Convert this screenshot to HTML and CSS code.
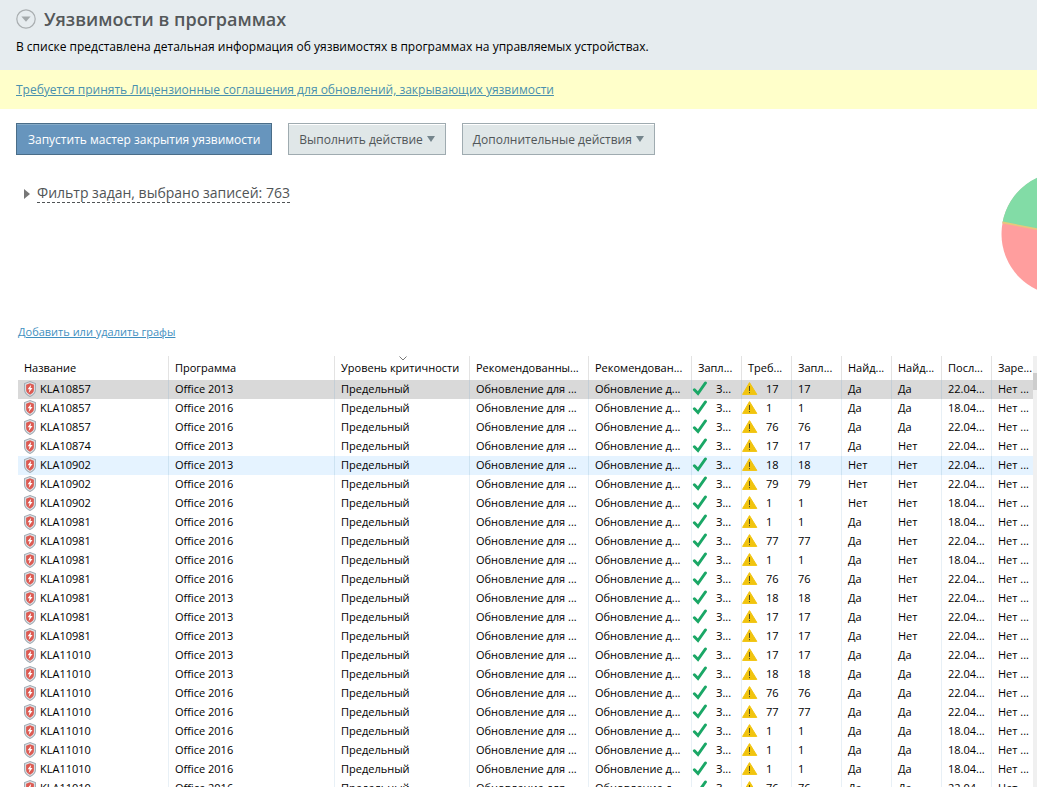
FILE: index.html
```html
<!DOCTYPE html>
<html lang="ru">
<head>
    <meta charset="UTF-8">
    <meta name="viewport" content="width=device-width, initial-scale=1.0">
    <title>Уязвимости в программах</title>
    <link rel="stylesheet" href="styles.css">
</head>
<body>
    <svg class="sprite" aria-hidden="true">
        <symbol id="icon-shield" viewBox="0 0 12 16">
            <path d="M6 .6 11.4 2.6V9C11.4 12 9 14 6 15.4 3 14 .6 12 .6 9V2.6Z" fill="#dfe5e9" stroke="#a0aab3" stroke-width="1.1"/>
            <path d="M6 2.3 9.9 3.7V9C9.9 11 8.2 12.6 6 13.7 3.8 12.6 2.1 11 2.1 9V3.7Z" fill="#dc5a52"/>
            <path d="M7.2 3.8 3.6 8.2H5.6L4.7 12 8.5 7.1H6.5Z" fill="#fff"/>
        </symbol>
        <symbol id="icon-check" viewBox="0 0 16 16">
            <path d="M2.4 8.8 6 12.5 13.4 2" fill="none" stroke="#1aa766" stroke-width="3" stroke-linecap="round"/>
        </symbol>
        <symbol id="icon-warning" viewBox="0 0 16 16">
            <path d="M7.5 1.6 14.8 13.4H.6Z" fill="#f1c40f" stroke="#f1c40f" stroke-width="1" stroke-linejoin="round"/>
            <path d="M7.5 5V10M7.5 11V12.2" stroke="#54501f" stroke-width="1"/>
        </symbol>
    </svg>

    <header class="page-header">
        <div class="title-row">
            <button class="collapse-btn" type="button" aria-label="Свернуть">
                <svg width="20" height="20" viewBox="0 0 20 20">
                    <circle cx="10" cy="10" r="9.2" fill="none" stroke="#a9aeb0" stroke-width="1.2"/>
                    <path d="M5.4 7.6H14.6L10 12.8Z" fill="#a3a9ab"/>
                </svg>
            </button>
            <h1>Уязвимости в программах</h1>
        </div>
        <p class="description">В списке представлена детальная информация об уязвимостях в программах на управляемых устройствах.</p>
    </header>

    <div class="notice">
        <a href="#">Требуется принять Лицензионные соглашения для обновлений, закрывающих уязвимости</a>
    </div>

    <div class="toolbar">
        <button class="btn btn-primary" type="button">Запустить мастер закрытия уязвимости</button>
        <button class="btn" type="button">Выполнить действие <span class="caret"></span></button>
        <button class="btn" type="button">Дополнительные действия <span class="caret"></span></button>
    </div>

    <section class="summary">
        <button class="filter-toggle" type="button">
            <span class="filter-arrow"></span>
            <span class="filter-text">Фильтр задан, выбрано записей: 763</span>
        </button>
        <div class="chart">
            <svg width="124" height="124" viewBox="-62 -62 124 124">
                <circle r="61.5" fill="#ff9e9e"/>
                <path d="M0 0-60.5-11.5A61.5 61.5 0 0 1 61.5 0Z" fill="#82dca6"/>
                <path d="M0 0-60.5-11.5" stroke="#e8c77c" stroke-width="1.8"/>
            </svg>
        </div>
    </section>

    <div class="columns-link">
        <a href="#">Добавить или удалить графы</a>
    </div>

    <div class="grid">
        <table>
            <colgroup>
                <col class="col-name">
                <col class="col-program">
                <col class="col-level">
                <col class="col-update">
                <col class="col-update-short">
                <col class="col-small" span="6">
                <col>
            </colgroup>
            <thead>
                <tr>
                    <th>Название</th>
                    <th>Программа</th>
                    <th class="sorted">Уровень критичности
                        <svg class="sort-mark" width="8" height="5" viewBox="0 0 8 5"><path d="M.5.5 4 4 7.5.5" fill="none" stroke="#777"/></svg>
                    </th>
                    <th>Рекомендованны...</th>
                    <th>Рекомендован...</th>
                    <th>Запл...</th>
                    <th>Треб...</th>
                    <th>Запл...</th>
                    <th>Найд...</th>
                    <th>Найд...</th>
                    <th>Посл...</th>
                    <th>Заре...</th>
                </tr>
            </thead>
            <tbody id="rows"></tbody>
        </table>
        <div class="scrollbar"><div class="scroll-thumb"></div></div>
    </div>

    <script>
        // название, версия Office, количество, найдено, найдено, дата
        const rows = [
            ['KLA10857', 2013, 17, 'Да', 'Да', 22],
            ['KLA10857', 2016, 1, 'Да', 'Да', 18],
            ['KLA10857', 2016, 76, 'Да', 'Да', 22],
            ['KLA10874', 2013, 17, 'Да', 'Нет', 22],
            ['KLA10902', 2013, 18, 'Нет', 'Нет', 22],
            ['KLA10902', 2016, 79, 'Нет', 'Нет', 22],
            ['KLA10902', 2016, 1, 'Нет', 'Нет', 18],
            ['KLA10981', 2016, 1, 'Да', 'Нет', 18],
            ['KLA10981', 2016, 77, 'Да', 'Нет', 22],
            ['KLA10981', 2016, 1, 'Да', 'Нет', 18],
            ['KLA10981', 2016, 76, 'Да', 'Нет', 22],
            ['KLA10981', 2013, 18, 'Да', 'Нет', 22],
            ['KLA10981', 2013, 17, 'Да', 'Нет', 22],
            ['KLA10981', 2013, 17, 'Да', 'Нет', 22],
            ['KLA11010', 2013, 17, 'Да', 'Да', 22],
            ['KLA11010', 2013, 18, 'Да', 'Да', 22],
            ['KLA11010', 2016, 76, 'Да', 'Да', 22],
            ['KLA11010', 2016, 77, 'Да', 'Да', 22],
            ['KLA11010', 2016, 1, 'Да', 'Да', 18],
            ['KLA11010', 2016, 1, 'Да', 'Да', 18],
            ['KLA11010', 2016, 1, 'Да', 'Да', 18],
            ['KLA11010', 2016, 76, 'Да', 'Да', 22]
        ];

        const icon = (name) => `<svg class="icon ${name}"><use href="#icon-${name}"/></svg>`;

        document.getElementById('rows').innerHTML = rows.map(([id, year, count, found1, found2, day], i) => `
            <tr class="${i === 0 ? 'selected' : i === 4 ? 'hovered' : ''}">
                <td class="with-icon">${icon('shield')}${id}</td>
                <td>Office ${year}</td>
                <td>Предельный</td>
                <td>Обновление для ...</td>
                <td>Обновление д...</td>
                <td class="with-icon">${icon('check')}З...</td>
                <td class="with-icon">${icon('warning')}${count}</td>
                <td>${count}</td>
                <td>${found1}</td>
                <td>${found2}</td>
                <td>${day}.04...</td>
                <td>Нет ...</td>
            </tr>`).join('');
    </script>
</body>
</html>
```
FILE: styles.css
```css
* {
    box-sizing: border-box;
}
body {
    display: flex;
    flex-direction: column;
    height: 100vh;
    margin: 0;
    overflow: hidden;
    background: #fff;
    color: #000;
    font-family: "Open Sans", "Noto Sans", sans-serif;
    font-size: 12px;
    line-height: 16px;
}
button {
    font-family: inherit;
    cursor: pointer;
}
a {
    color: #3f8fc0;
}
.sprite {
    display: none;
}
.page-header {
    flex: none;
    height: 70px;
    padding: 8px 16px;
    background: #e6ecef;
}
.title-row {
    display: flex;
    align-items: center;
    gap: 8px;
}
.collapse-btn {
    width: 20px;
    height: 20px;
    padding: 0;
    border: none;
    background: none;
}
.collapse-btn svg {
    display: block;
}
h1 {
    margin: 0;
    color: #54585a;
    font-size: 18px;
    font-weight: 600;
    line-height: 22px;
}
.description {
    margin: 9px 0 0;
}
.notice {
    flex: none;
    padding: 12px 16px 11px;
    background: #ffffca;
}
.notice a {
    color: #4990ae;
}
.toolbar {
    display: flex;
    flex: none;
    gap: 16px;
    padding: 14px 16px 0;
}
.btn {
    display: flex;
    align-items: center;
    height: 32px;
    padding: 0 10px;
    border: 1px solid #9fabb0;
    background: #e0e7e8;
    box-shadow: inset 0 1px #fff;
    color: #505658;
    font-size: 12px;
    white-space: nowrap;
}
.btn-primary {
    padding: 0 11px;
    border-color: #4a6d88;
    background: #6795bd;
    box-shadow: inset 0 1px #85abc8;
    color: #fff;
}
.caret {
    margin-left: 4px;
    border: 4px solid transparent;
    border-top: 6px solid #75858c;
    border-bottom: none;
}
.summary {
    display: flex;
    flex: none;
    justify-content: space-between;
    height: 169px;
    padding: 17px 0 0 24px;
}
.filter-toggle {
    display: flex;
    align-items: center;
    align-self: flex-start;
    gap: 7px;
    margin-top: 12px;
    padding: 0;
    border: none;
    background: none;
    color: #505456;
    font-size: 14px;
}
.filter-arrow {
    border: 5px solid transparent;
    border-left: 6px solid #777;
    border-right: none;
}
.filter-text {
    border-bottom: 1px dashed #505456;
    line-height: 18px;
}
.chart {
    width: 36px;
    overflow: hidden;
}
.chart svg {
    display: block;
}
.columns-link {
    flex: none;
    padding: 0 18px;
    font-size: 11px;
}
.grid {
    display: flex;
    flex: 1;
    min-height: 0;
    margin-top: 16px;
    padding-left: 18px;
    overflow: hidden;
    font-size: 11px;
}
table {
    flex: 1;
    width: 100%;
    min-width: 0;
    height: max-content;
    border-collapse: separate;
    border-spacing: 0;
    table-layout: fixed;
}
.col-name { width: 151px; }
.col-program { width: 166px; }
.col-level { width: 135px; }
.col-update { width: 119px; }
.col-update-short { width: 103px; }
.col-small { width: 50px; }
th, td {
    height: 19px;
    padding: 0 0 1px 6px;
    border-right: 1px solid #e8f0f6;
    font-weight: normal;
    line-height: 18px;
    text-align: left;
    white-space: nowrap;
}
th {
    height: 24px;
    border-color: #e3e3e3;
}
th:last-child, td:last-child {
    border-right: none;
}
.sorted {
    position: relative;
}
.sort-mark {
    position: absolute;
    top: 0;
    left: 64px;
}
.selected {
    background: #d9d9d9;
}
.selected td {
    border-color: #c4ced6;
}
.hovered {
    background: #e5f3ff;
}
.hovered td {
    border-color: #cde3f2;
}
.with-icon {
    padding-left: 0;
}
.icon {
    display: inline-block;
    width: 16px;
    height: 16px;
    margin-right: 8px;
    vertical-align: -4px;
}
.shield {
    width: 12px;
    margin: 0 4px 0 6px;
}
.scrollbar {
    flex: none;
    width: 4px;
    padding-top: 17px;
    background: #f0f0f0;
}
.scroll-thumb {
    height: 17px;
    background: #cdcdcd;
}
```
